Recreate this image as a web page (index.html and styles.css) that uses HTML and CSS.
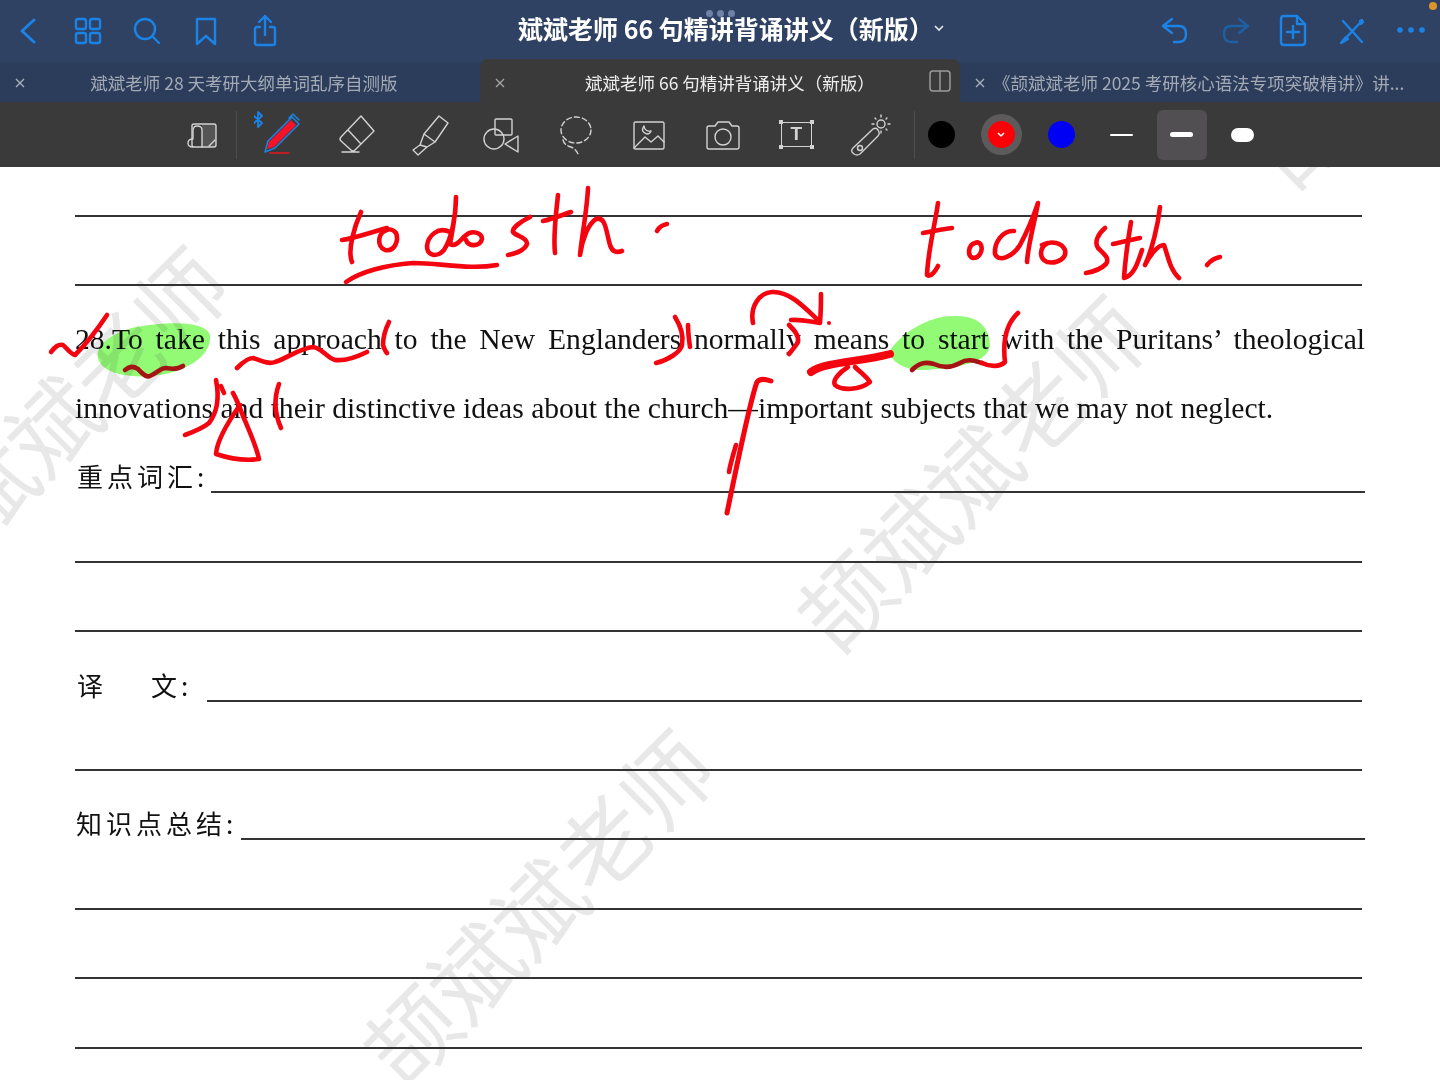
FILE: index.html
```html
<!DOCTYPE html>
<html lang="zh-CN">
<head>
  <meta charset="UTF-8">
  <meta name="viewport" content="width=device-width, initial-scale=1.0">
  <title>斌斌老师 66 句精讲背诵讲义（新版）</title>
  <link rel="stylesheet" href="styles.css">
</head>
<body>

  <div class="topbar">
    <div class="nav-group">
      <svg class="icon back" width="59" height="40" viewBox="0 0 59 40"><path d="M34 9 L22 20 L34 31"/></svg>
      <svg class="icon" width="59" height="40" viewBox="0 0 59 40"><rect x="17" y="8" width="10" height="10" rx="2"/><rect x="31" y="8" width="10" height="10" rx="2"/><rect x="17" y="22" width="10" height="10" rx="2"/><rect x="31" y="22" width="10" height="10" rx="2"/></svg>
      <svg class="icon" width="59" height="40" viewBox="0 0 59 40"><circle cx="27" cy="18" r="10"/><path d="M34.5 25.500 L41 32"/></svg>
      <svg class="icon" width="59" height="40" viewBox="0 0 59 40"><path d="M20 8 H38 V33 L29 25 L20 33 Z"/></svg>
      <svg class="icon" width="59" height="40" viewBox="0 0 59 40"><path d="M24 16 H21 Q19 16 19 18 V32 Q19 34 21 34 H37 Q39 34 39 32 V18 Q39 16 37 16 H34 M29 24 V5 M23 11 L29 5 L35 11"/></svg>
    </div>
    <div class="doc-title">斌斌老师 66 句精讲背诵讲义（新版）<svg class="title-caret" width="10" height="8" viewBox="0 0 10 8"><path d="M1 2 L5 6 L9 2"/></svg></div>
    <div class="nav-group">
      <svg class="icon" width="59" height="40" viewBox="0 0 59 40"><path d="M27 8 L18 15 L27 22 M18 15 H34 Q41 15 41 23 Q41 31 34 31 H29"/></svg>
      <svg class="icon dim" width="59" height="40" viewBox="0 0 59 40"><path d="M35 8 L44 15 L35 22 M44 15 H27 Q20 15 20 23 Q20 31 27 31 H33"/></svg>
      <svg class="icon" width="59" height="40" viewBox="0 0 59 40"><path d="M34 5 H21 Q18 5 18 8 V31 Q18 34 21 34 H39 Q42 34 42 31 V13 Z M34 5 V13 H42 M30 15 V27 M24 21 H36"/></svg>
      <svg class="icon" width="59" height="40" viewBox="0 0 59 40"><path d="M21 10 L40 31 M38 12 L21 30"/><path class="fill" d="M19 32 L24 26 L26 28 Z M38 10 L40 9 L41 11 L39 13 Z"/></svg>
      <svg class="icon dots" width="59" height="40" viewBox="0 0 59 40"><circle cx="19" cy="19" r="2.800"/><circle cx="30" cy="19" r="2.800"/><circle cx="41" cy="19" r="2.800"/></svg>
    </div>
    <span class="grabber"><i></i><i></i><i></i></span>
    <span class="rec-dot"></span>
  </div>

  <div class="tabs">
    <div class="tab">
      <svg class="tab-close" width="10" height="10" viewBox="0 0 10 10"><path d="M1 1 L9 9 M9 1 L1 9"/></svg>
      <span class="tab-name">斌斌老师 28 天考研大纲单词乱序自测版</span>
    </div>
    <div class="tab active">
      <svg class="tab-close" width="10" height="10" viewBox="0 0 10 10"><path d="M1 1 L9 9 M9 1 L1 9"/></svg>
      <span class="tab-name">斌斌老师 66 句精讲背诵讲义（新版）</span>
      <svg class="split" width="22" height="22" viewBox="0 0 22 22"><rect x="1" y="1" width="20" height="20" rx="3"/><path d="M11 1 V21"/></svg>
    </div>
    <div class="tab narrow">
      <svg class="tab-close" width="10" height="10" viewBox="0 0 10 10"><path d="M1 1 L9 9 M9 1 L1 9"/></svg>
      <span class="tab-name">《颉斌斌老师 2025 考研核心语法专项突破精讲》讲...</span>
    </div>
  </div>

  <div class="toolbar">
    <div class="tool first">
      <svg width="32" height="30" viewBox="0 0 32 30"><path class="shade" d="M15 4 H29 V27 H15 Z"/><rect x="5" y="4" width="24" height="23" rx="2"/><path d="M15 27 V10 Q15 6 10 6 Q6 6 6 11 V19 Q1 19 1 23 Q1 27 6 27 M22 26 L28 20"/></svg>
    </div>
    <span class="tool-sep"></span>
    <div class="tool pen-tool">
      <svg width="56" height="50" viewBox="0 0 56 50">
        <path class="bt" d="M0 6 L8 13 L4 17 V2 L8 6 L0 13"/>
        <path class="pen-body" d="M13 39 L15 32 L37 10 L42 15 L20 37 Z"/>
        <path class="pen-clip" d="M11 42 L14 31 L38 7 L45 14 L21 38 Z M35 8 L39 4 L45 10"/>
        <path class="pen-mark" d="M16 43 H35"/>
      </svg>
    </div>
    <div class="tool">
      <svg class="nudge" width="44" height="44" viewBox="0 0 44 44"><path d="M25 3 L38 18 L19 37 Q17 39 15 37 L5 28 Q3 26 5 24 Z M12 17 L25 31 M6 39 H23"/></svg>
    </div>
    <div class="tool">
      <svg width="44" height="44" viewBox="0 0 44 44"><path d="M32 3 L41 10 L28 29 L17 21 Z M17 21 L13 32 L20 34 L28 29 M13 32 L6 37 L11 42 L20 34"/></svg>
    </div>
    <div class="tool">
      <svg width="44" height="44" viewBox="0 0 44 44"><rect x="15" y="6" width="17" height="16" rx="1"/><circle cx="14" cy="26" r="10"/><path d="M38 23 V39 L25 31 Z"/></svg>
    </div>
    <div class="tool">
      <svg width="44" height="44" viewBox="0 0 44 44"><ellipse class="dash" cx="22" cy="17" rx="15" ry="13"/><path class="dash" d="M9 27 Q10 32 17 34 Q22 36 24 41"/></svg>
    </div>
    <div class="tool">
      <svg width="44" height="44" viewBox="0 0 44 44"><rect x="7" y="9" width="30" height="27" rx="1.500"/><path d="M7 35 L18 24 L24 29 L31 23 L37 29 M17 13 Q13 19 20 21 Q23 21 24 18 Q18 19 17 13 Z"/></svg>
    </div>
    <div class="tool">
      <svg width="44" height="44" viewBox="0 0 44 44"><path d="M8 13 Q6 13 6 15 V34 Q6 36 8 36 H36 Q38 36 38 34 V15 Q38 13 36 13 H31 L28 9 H17 L14 13 Z"/><circle cx="22" cy="24" r="8"/></svg>
    </div>
    <div class="tool">
      <div class="text-box"><i class="tl"></i><i class="tr"></i><i class="bl"></i><i class="br"></i>T</div>
    </div>
    <div class="tool">
      <svg width="44" height="44" viewBox="0 0 44 44"><path d="M5 35 L25 16 Q28 14 30 17 L31 19 Q32 21 30 23 L12 41 Q9 43 6 41 L4 39 Q3 37 5 35 Z"/><circle cx="12" cy="35" r="2.500"/><circle cx="33" cy="11" r="4"/><path d="M33 2 V4 M33 18 V20 M42 11 H40 M26 11 H24 M39 5 L38 6 M27 5 L28 6 M39 17 L38 16"/></svg>
    </div>
    <span class="tool-sep end"></span>
    <div class="swatches">
      <span class="swatch black"></span>
      <span class="swatch red"><svg width="8" height="6" viewBox="0 0 8 6"><path d="M1 1 L4 4 L7 1"/></svg></span>
      <span class="swatch blue"></span>
    </div>
    <div class="widths">
      <span class="width-opt"><i class="thin"></i></span>
      <span class="width-opt current"><i class="mid"></i></span>
      <span class="width-opt"><i class="thick"></i></span>
    </div>
  </div>

  <div class="page">
    <span class="wm wm-a">颉斌斌老师</span>
    <span class="wm wm-b">颉斌斌老师</span>
    <span class="wm wm-c">颉斌斌老师</span>
    <span class="wm wm-d">颉斌斌老师</span>

    <div class="rule first-rule"></div>
    <div class="rule"></div>
    <div class="sentence">
      <p class="stretch">28.To take this approach to the New Englanders normally means to start with the Puritans’ theological</p>
      <p>innovations and their distinctive ideas about the church—important subjects that we may not neglect.</p>
    </div>
    <div class="rule first-rule labelled wide"><span class="label key-label">重点词汇:</span><span class="fill-line"></span></div>
    <div class="rule"></div>
    <div class="rule"></div>
    <div class="rule labelled"><span class="label trans-label">译<b></b>文:</span><span class="fill-line"></span></div>
    <div class="rule"></div>
    <div class="rule labelled wide"><span class="label sum-label">知识点总结:</span><span class="fill-line"></span></div>
    <div class="rule"></div>
    <div class="rule"></div>
    <div class="rule"></div>

    <svg class="ink" viewBox="0 167 1440 913" width="1440" height="913">
      <g class="marker">
        <path d="M98 352 C102 338 125 327 150 325 C175 322 205 322 210 335 C212 352 195 366 170 373 C145 379 115 377 104 367 C98 362 97 357 98 352 Z"/>
        <path d="M889 352 C900 335 925 316 955 316 C980 315 990 330 990 345 C989 362 960 368 925 370 C905 371 892 362 889 352 Z"/>
      </g>
      <g class="pen">
        <path d="M361 212 C355 225 347 250 352 262"/>
        <path d="M342 240 C355 238 372 232 387 228"/>
        <path d="M387 230 C378 232 376 246 385 250 C395 252 399 240 396 233 C393 229 389 229 387 230"/>
        <path d="M450 232 C438 226 428 236 427 246 C427 256 437 258 444 250 C452 238 456 215 456 197 C456 215 452 232 450 244 C456 248 462 238 465 236 C472 229 482 233 482 239 C480 247 468 247 466 240"/>
        <path d="M530 217 C520 222 512 228 513 232 C516 236 528 238 527 244 C525 250 515 254 508 255"/>
        <path d="M558 195 C556 215 553 235 555 253"/>
        <path d="M543 221 C552 219 562 215 571 212"/>
        <path d="M588 188 C587 210 582 235 580 255 C582 240 588 224 596 219 C606 216 606 232 610 245 C612 252 617 253 622 251"/>
        <path d="M657 231 C659 227 662 225 667 224"/>
        <path d="M346 282 C360 272 385 265 413 263 C440 263 470 270 497 265"/>
        <path d="M938 203 C935 225 928 250 927 275 C931 278 936 270 938 266"/>
        <path d="M923 233 C933 231 943 229 952 228"/>
        <path d="M975 243 C968 245 967 256 973 258 C980 258 983 250 981 245 C979 242 977 242 975 243"/>
        <path d="M1014 231 C1003 230 994 242 995 254 C998 262 1012 258 1020 245 C1028 230 1034 215 1038 203 C1034 225 1028 245 1027 262"/>
        <path d="M1048 243 C1040 246 1038 258 1047 262 C1058 264 1067 258 1065 250 C1062 243 1052 240 1042 245"/>
        <path d="M1105 228 C1098 234 1094 242 1098 248 C1104 254 1110 258 1106 264 C1100 270 1092 272 1086 273"/>
        <path d="M1131 222 C1128 240 1125 262 1124 278 C1134 276 1138 262 1142 250"/>
        <path d="M1113 244 C1122 242 1130 240 1140 238"/>
        <path d="M1160 207 C1158 225 1152 250 1145 265 C1150 255 1158 245 1164 245 C1168 256 1170 270 1179 278"/>
        <path d="M1207 265 C1211 260 1215 258 1220 257"/>

        <path d="M51 352 C55 347 58 344 63 345 C67 348 70 354 75 355 C85 345 97 330 107 315"/>
        <path class="dark" d="M125 370 C130 366 133 366 138 369 C142 373 146 378 150 376 C157 373 160 368 166 368 C171 369 177 370 183 366"/>
        <path d="M237 368 C243 362 248 358 253 358 C260 360 268 365 275 362 C288 358 300 348 313 347 C322 348 327 358 335 360 C345 361 357 357 367 352"/>
        <path d="M389 322 C385 330 383 340 383 345 C384 348 385 351 387 353"/>
        <path d="M675 317 C680 325 684 335 682 345 C681 352 668 360 656 363"/>
        <path d="M688 325 C688 332 689 340 690 347"/>
        <path d="M216 380 C219 395 219 410 209 423 C203 428 193 432 185 435"/>
        <path d="M221 386 C222 389 223 391 224 393"/>
        <path d="M233 393 C237 400 240 408 243 416 C248 428 256 445 259 459 C245 461 228 458 216 454 C217 440 228 422 240 405"/>
        <path d="M279 384 C275 395 273 410 281 428"/>
        <path d="M753 323 C750 308 758 293 772 292 C790 291 805 308 820 322 C821 312 821 302 821 294"/>
        <path d="M791 320 C800 319 812 322 820 323"/>
        <path d="M789 325 C794 330 799 335 798 342 C796 346 792 350 789 354"/>
        <circle class="pen-dot" cx="829" cy="323" r="2"/>
        <path class="heavy" d="M811 372 C825 362 860 362 890 354"/>
        <path d="M848 367 C840 372 832 380 835 385 C842 391 860 390 870 382 C866 376 860 372 855 367"/>
        <path class="dark" d="M912 370 C920 362 926 362 934 364 C945 369 953 367 960 363 C968 358 975 361 982 363"/>
        <path d="M982 363 C990 367 1000 367 1005 362 C1003 345 1005 325 1018 313"/>
        <path class="fat" d="M771 381 C765 379 760 378 757 382 C752 395 744 430 727 513"/>
        <path d="M736 445 C733 455 730 465 729 472"/>
      </g>
    </svg>
  </div>

</body>
</html>
```

FILE: styles.css
```css
* {
  box-sizing: border-box;
}

html,
body {
  margin: 0;
  padding: 0;
}

body {
  width: 1440px;
  height: 1080px;
  overflow: hidden;
  background: #fff;
  font-family: "Noto Sans CJK SC", "Noto Sans", sans-serif;
}

/* top bar */

.topbar {
  position: relative;
  height: 62px;
  display: flex;
  align-items: center;
  justify-content: space-between;
  background: #2f4263;
}

.nav-group {
  display: flex;
  align-items: center;
}

.icon {
  fill: none;
  stroke: #1c83e6;
  stroke-width: 2.4;
  stroke-linecap: round;
  stroke-linejoin: round;
}

.icon.back {
  stroke-width: 3;
}

.icon.dim {
  stroke: #1f5fa3;
}

.icon .fill,
.icon.dots {
  fill: #1c83e6;
}

.icon.dots {
  stroke: none;
}

.doc-title {
  position: absolute;
  left: 518px;
  top: 10px;
  display: flex;
  align-items: center;
  color: #fff;
  font-size: 25px;
  font-weight: 700;
  line-height: 36px;
  white-space: nowrap;
}

.title-caret {
  margin-left: 0;
  fill: none;
  stroke: #e6e9ee;
  stroke-width: 1.6;
}

.grabber {
  position: absolute;
  left: 706px;
  top: 10px;
  display: flex;
  gap: 4px;
}

.grabber i {
  width: 7px;
  height: 7px;
  border-radius: 50%;
  background: #6d82a6;
}

.rec-dot {
  position: absolute;
  left: 1429px;
  top: 2px;
  width: 8px;
  height: 8px;
  border-radius: 50%;
  background: #dc952c;
}

/* tabs */

.tabs {
  height: 40px;
  display: flex;
  background: #2c3d5b;
}

.tab {
  position: relative;
  width: 480px;
  height: 40px;
  padding: 0 30px 0 38px;
  display: flex;
  align-items: center;
  justify-content: center;
  color: #a3aab5;
  font-size: 17.500px;
  white-space: nowrap;
}

.tab.active {
  height: 44px;
  margin-top: -3px;
  padding: 3px 30px 0 50px;
  border-radius: 8px 8px 0 0;
  background: #3a3a3a;
  color: #eee;
}

.tab.narrow {
  padding: 0 0 0 33px;
  justify-content: flex-start;
}

.tab-close {
  position: absolute;
  left: 15px;
  top: 16px;
  fill: none;
  stroke: #aeb3bb;
  stroke-width: 1.300;
}

.tab.active .tab-close {
  top: 19px;
  stroke: #a5a5a5;
}

.split {
  position: absolute;
  right: 9px;
  top: 11px;
  fill: none;
  stroke: #9a9a9a;
  stroke-width: 1.500;
}

/* tools */

.toolbar {
  height: 65px;
  padding-left: 170px;
  display: flex;
  align-items: center;
  background: #3a3a3a;
}

.tool {
  width: 73.500px;
  height: 50px;
  display: flex;
  align-items: center;
  justify-content: center;
}

.tool.first {
  width: 66px;
}

.tool.pen-tool {
  margin-left: 8px;
}

.tool svg {
  fill: none;
  stroke: #d2d2d2;
  stroke-width: 1.400;
  stroke-linejoin: round;
  stroke-linecap: round;
}

.tool svg.nudge {
  transform: translateX(3px);
}

.tool .shade {
  fill: #555;
  stroke: none;
}

.tool .dash {
  stroke-dasharray: 5 3;
}

.tool .bt {
  stroke: #1c83e6;
  stroke-width: 1.800;
}

.tool .pen-body {
  fill: #f3142a;
  stroke: none;
}

.tool .pen-clip {
  stroke: #1c83e6;
  stroke-width: 1.500;
}

.tool .pen-mark {
  stroke: #e8141f;
  stroke-width: 1.500;
}

.tool-sep {
  width: 1px;
  height: 48px;
  background: #4d4d4d;
}

.tool-sep.end {
  margin-left: 7px;
}

.text-box {
  position: relative;
  width: 31px;
  height: 25px;
  border: 1.500px solid #d2d2d2;
  color: #d2d2d2;
  font-family: "Liberation Sans", sans-serif;
  font-size: 19px;
  font-weight: 700;
  line-height: 22px;
  text-align: center;
}

.text-box i {
  position: absolute;
  width: 4px;
  height: 4px;
  background: #d2d2d2;
}

.text-box .tl { left: -3px; top: -3px; }
.text-box .tr { right: -3px; top: -3px; }
.text-box .bl { left: -3px; bottom: -3px; }
.text-box .br { right: -3px; bottom: -3px; }

.swatches {
  margin-left: 13px;
  display: flex;
  align-items: center;
  gap: 33px;
}

.swatch {
  position: relative;
  width: 27px;
  height: 27px;
  display: flex;
  align-items: center;
  justify-content: center;
  border-radius: 50%;
}

.swatch.black { background: #000; }
.swatch.blue { background: #0000f5; }

.swatch.red {
  background: #fb0007;
  box-shadow: 0 0 0 7px #5d5a5c;
}

.swatch.red svg {
  fill: none;
  stroke: #fff;
  stroke-width: 1.500;
}

.widths {
  margin-left: 21.500px;
  display: flex;
  gap: 10.500px;
}

.width-opt {
  width: 50px;
  height: 50px;
  display: flex;
  align-items: center;
  justify-content: center;
  border-radius: 6px;
}

.width-opt.current {
  background: #524f52;
}

.width-opt i {
  width: 23px;
  background: #fff;
  border-radius: 7px;
}

.width-opt .thin { height: 2px; }
.width-opt .mid { height: 5px; }
.width-opt .thick { height: 14px; }

/* page */

.page {
  position: relative;
  height: 913px;
  padding: 0 78px 0 75px;
  overflow: hidden;
  background: #fff;
}

.wm {
  position: absolute;
  transform: translate(-50%, -50%) rotate(-45deg);
  color: #e8e8e8;
  font-size: 90px;
  font-weight: 400;
  line-height: 1;
  white-space: nowrap;
}

.wm-a { left: 50px; top: 255px; }
.wm-b { left: 970px; top: 304px; }
.wm-c { left: 536px; top: 738px; }
.wm-d { left: 1425px; top: -160px; }

.rule {
  position: relative;
  height: 69.400px;
  border-bottom: 2px solid #333;
}

.rule.first-rule {
  height: 50px;
}

.rule.labelled {
  display: flex;
  align-items: flex-end;
  border-bottom: 0;
}

.rule.wide {
  margin-right: -3px;
}

.fill-line {
  flex: 1;
  border-bottom: 2px solid #333;
}

.label {
  margin-bottom: -1px;
  color: #111;
  font-size: 26px;
  line-height: 36px;
  letter-spacing: 4px;
  white-space: nowrap;
}

.key-label { width: 136px; padding-left: 2px; }
.trans-label { width: 132px; padding-left: 2px; }
.sum-label { width: 166px; padding-left: 1px; }

.trans-label b {
  display: inline-block;
  width: 44px;
}

.sentence {
  position: relative;
  margin-right: -3px;
  padding-top: 19px;
  color: #111;
  font-family: "Liberation Serif", serif;
  font-size: 29.600px;
  line-height: 69px;
}

.sentence p {
  margin: 0;
  white-space: nowrap;
}

.sentence .stretch {
  white-space: normal;
  text-align: justify;
  text-align-last: justify;
}

.ink {
  position: absolute;
  left: 0;
  top: 0;
}

.marker {
  fill: #93fa76;
  mix-blend-mode: multiply;
}

.pen {
  fill: none;
  stroke: #f3040f;
  stroke-width: 4.600;
  stroke-linecap: round;
  stroke-linejoin: round;
}

.pen .dark {
  stroke: #a51414;
}

.pen .heavy {
  stroke-width: 8;
}

.pen .fat {
  stroke-width: 5;
}

.pen .pen-dot {
  fill: #f3040f;
  stroke: none;
}
```
